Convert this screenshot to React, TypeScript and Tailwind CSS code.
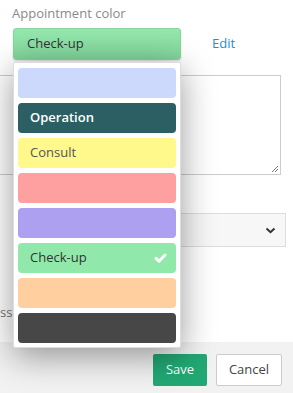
import React from "react";

type ColorItem = {
  bg: string;
  label?: string;
  text?: string;
  selected?: boolean;
};

const colors: ColorItem[] = [
  { bg: "bg-[#ccd9fc]" },
  { bg: "bg-[#2b5f63]", label: "Operation", text: "text-white font-semibold" },
  { bg: "bg-[#fff88a]", label: "Consult", text: "text-[#555]" },
  { bg: "bg-[#ffa0a0]" },
  { bg: "bg-[#ada0f0]" },
  { bg: "bg-[#91e8ab]", label: "Check-up", text: "text-[#333]", selected: true },
  { bg: "bg-[#ffcfa0]" },
  { bg: "bg-[#474747]" },
];

const CheckIcon = () => (
  <svg width="13" height="10" viewBox="0 0 13 10" fill="none">
    <path d="M2 5.4 L5 8.2 L11 2" stroke="white" strokeWidth="3" strokeLinecap="round" strokeLinejoin="round" />
  </svg>
);

const App: React.FC = () => {
  return (
    <div className="relative w-[293px] h-[393px] overflow-hidden bg-white font-['Open_Sans',sans-serif] text-[13px]">
      {/* modal body */}
      <div className="h-[342px] flex flex-col pl-3">
        <div className="pt-[3px] leading-5 text-[#8a8a8a]">Appointment color</div>

        {/* colour picker row */}
        <div className="relative mt-[5px] flex items-center">
          <button className="w-[168px] h-8 ml-[1px] rounded-[3px] border border-[#86d69d] bg-gradient-to-b from-[#95e7ae] to-[#80d59a] text-left pl-[13px] text-[#333] shadow-[0_1px_2px_rgba(0,0,0,0.15)]">
            Check-up
          </button>
          <span className="ml-[31px] text-[#1a8fd8]">Edit</span>

          {/* dropdown menu */}
          <div className="absolute z-10 top-[34px] left-[1px] w-[168px] bg-white border border-[#ddd] rounded-[2px] px-[4px] pt-[5px] pb-[4px] flex flex-col gap-[5px] shadow-[0_8px_34px_rgba(0,0,0,0.4)]">
            {colors.map((c, i) => (
              <div
                key={i}
                className={`h-[30px] rounded-[4px] flex items-center justify-between pl-3 pr-[9px] ${c.bg} ${c.text ?? ""}`}
              >
                <span>{c.label}</span>
                {c.selected && <CheckIcon />}
              </div>
            ))}
          </div>
        </div>

        {/* notes textarea */}
        <div className="mt-[15px] -ml-5 w-[289px] h-[100px] border border-[#ccc] relative">
          <svg className="absolute right-[1px] bottom-[1px]" width="9" height="9" viewBox="0 0 9 9">
            <path d="M8 2 L2 8 M8 5 L5 8" stroke="#777" strokeWidth="1" />
          </svg>
        </div>

        {/* select */}
        <div className="mt-[38px] ml-2 w-[266px] h-[34px] border border-[#ddd] bg-[#f7f7f7] flex items-center justify-end pr-[9px]">
          <svg width="11" height="7" viewBox="0 0 11 7">
            <path d="M1.5 1.5 L5.5 5.2 L9.5 1.5" stroke="#333" strokeWidth="2" fill="none" />
          </svg>
        </div>

        <div className="mt-[57px] -ml-3 text-[#777] leading-4">ss</div>
      </div>

      {/* footer */}
      <div className="h-[51px] bg-[#f2f2f2] flex justify-end gap-[9px] pt-3 pr-[11px]">
        <button className="w-[54px] h-8 rounded-[2px] bg-[#22a874] text-white">Save</button>
        <button className="w-[66px] h-8 rounded-[2px] bg-white border border-[#ccc] text-[#444]">Cancel</button>
      </div>
    </div>
  );
};

export default App;
